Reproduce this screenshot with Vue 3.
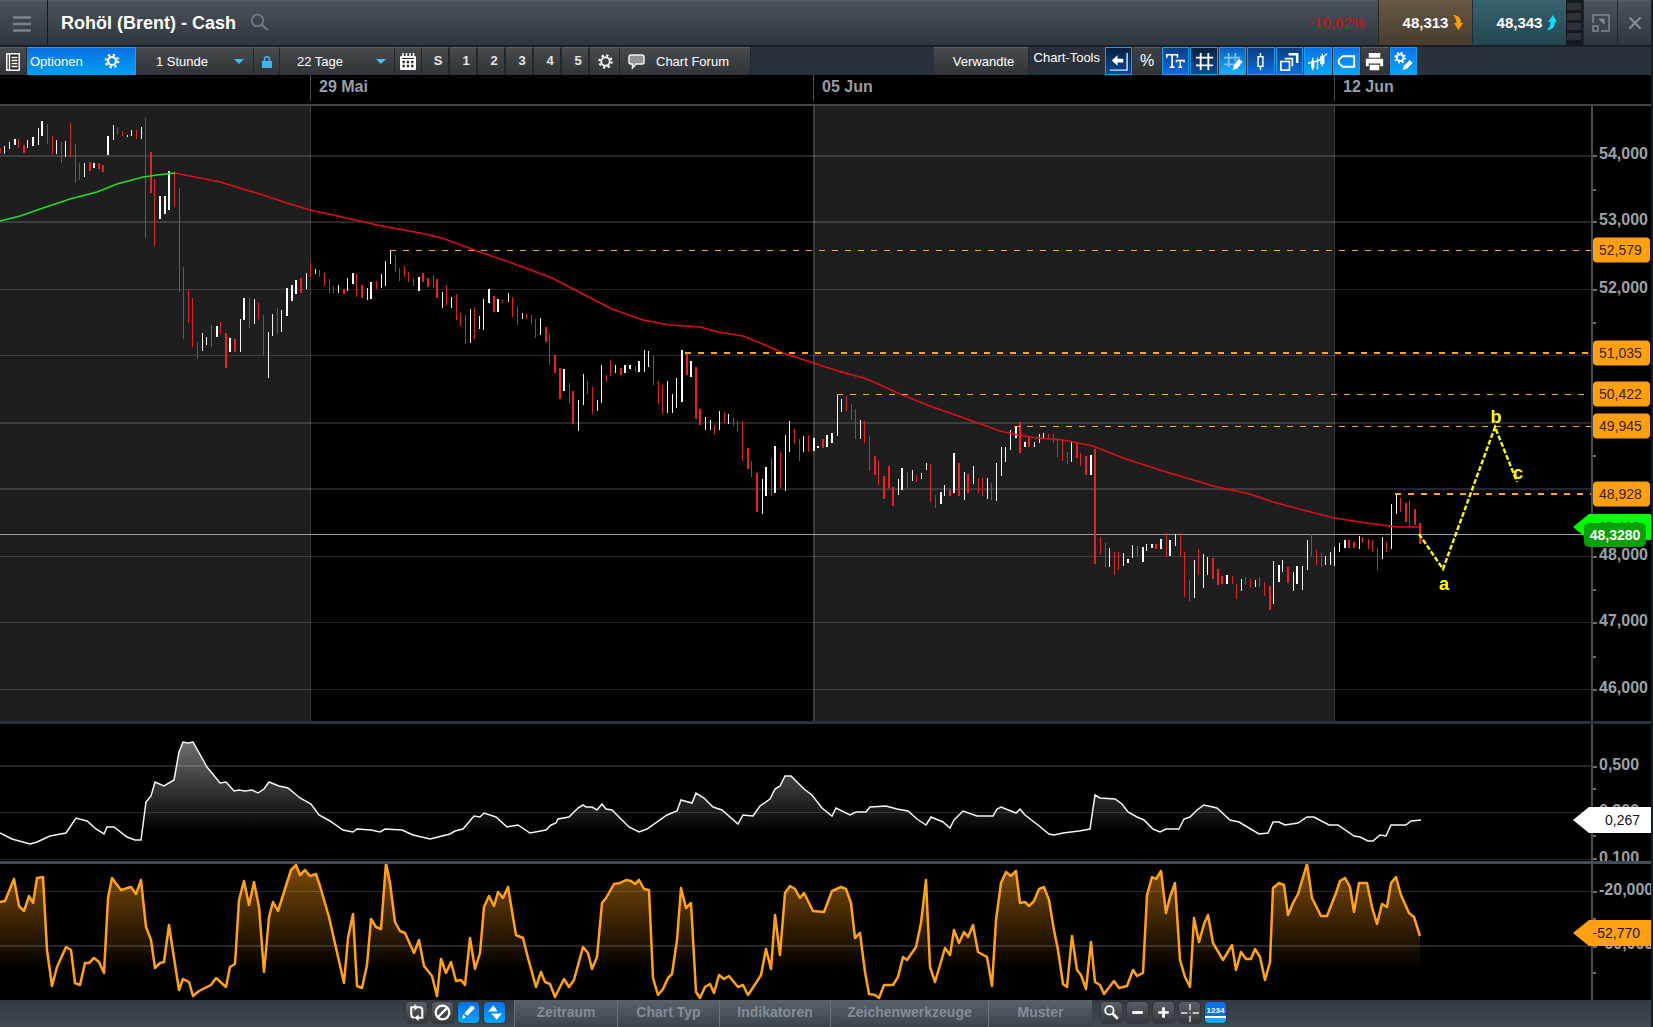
<script setup>
import { ref } from 'vue'

const interval = ref('1 Stunde')
const range = ref('22 Tage')
const presets = ['S', '1', '2', '3', '4', '5']
const tabs = [
  { label: 'Zeitraum', width: 103 },
  { label: 'Chart Typ', width: 102 },
  { label: 'Indikatoren', width: 111 },
  { label: 'Zeichenwerkzeuge', width: 158 },
  { label: 'Muster', width: 104 },
]

/* Plot space: one coordinate system shared by all three panels. */
const W = 1591
const price = { top: 106, height: 615 }
const atr = { top: 724, height: 137 }
const osc = { top: 864, height: 136 }

const pctX = (x) => `${(x / W) * 100}%`
const pctY = (panel, y) => `${((y - panel.top) / panel.height) * 100}%`

const days = [
  { x: 310, label: '29 Mai', w: 1 },
  { x: 813, label: '05 Jun', w: 2 },
  { x: 1334, label: '12 Jun', w: 1 },
]

const grid = [
  { y: 155, h: 2, label: '54,000' },
  { y: 221, h: 2, label: '53,000' },
  { y: 289, h: 1, label: '52,000' },
  { y: 355, h: 1, label: '' },
  { y: 422, h: 2, label: '' },
  { y: 488, h: 2, label: '' },
  { y: 556, h: 1, label: '48,000' },
  { y: 622, h: 1, label: '47,000' },
  { y: 689, h: 1, label: '46,000' },
]
const priceMinor = [189, 256, 322, 389, 455, 589, 656]

const levels = [
  { y: 250, x: 390, w: 1, label: '52,579' },
  { y: 353, x: 685, w: 2, label: '51,035' },
  { y: 394, x: 837, w: 1, label: '50,422' },
  { y: 426, x: 1014, w: 1, label: '49,945' },
  { y: 494, x: 1395, w: 2, label: '48,928' },
]
const waves = [
  { x: 1444, y: 584, label: 'a' },
  { x: 1496, y: 417, label: 'b' },
  { x: 1518, y: 473, label: 'c' },
]

/* Bars per block: kind x high low, in thirds of a unit from the block origin.
   w/W rising, r/R falling; capitals have a visible body. */
const blocks = [
  { x: 0, y: 100, bars: 'r 1 145 160;w 13 138 162;w 28 127 147;W 45 117 136;r 55 117 145;R 71 136 160;w 82 120 143;W 99 110 138;w 115 85 136;W 126 62 108;r 142 71 132;r 157 108 163;w 169 120 162;r 184 125 190;w 196 123 170;r 211 68 170;r 226 132 250;r 238 190 240;w 253 190 231;R 270 185 214;W 282 190 205;R 297 190 207;R 309 195 217;W 324 108 164;w 340 75 120;r 352 80 106;r 367 92 108;w 381 104 109;w 394 90 108;r 409 90 116;w 424 80 117;r 436 53 414;R 453 156 279;r 463 236 438;W 480 288 356;W 495 287 343;W 507 212 329;r 523 214 320;r 538 263 577;r 550 501 717;r 565 569 670;r 577 594 740;r 592 725 776;w 607 699 752;w 619 711 734;r 634 676 740;W 651 677 712;r 661 667 703;R 678 700 804;W 690 714 756;R 705 716 756;w 721 658 756;W 732 595 659;r 748 594 684;w 763 598 671;r 775 609 660;r 790 646 766;w 805 697 835;w 817 641 708;r 832 625 702;w 844 630 696;W 861 564 648;W 876 554 602;W 888 541 583;R 903 533 579;w 919 520 567;r 931 488 530;w 946 508 523;r 958 509 530;r 973 520 557;r 988 536 578;r 1000 557 578;w 1015 555 579;R 1032 567 581;w 1042 534 574;W 1059 520 552;r 1069 521 592;R 1086 555 594;w 1102 564 600;W 1113 546 597;r 1129 542 567;w 1144 521 563;w 1156 484 558' },
  { x: 370, y: 230, bars: 'w 61 60 101;r 76 74 125;r 88 113 153;r 103 108 141;r 115 127 155;r 130 144 168;W 147 140 182;R 159 129 156;R 174 144 170;r 190 134 170;R 201 147 204;w 217 185 234;r 229 166 229;w 244 201 234;r 259 193 270;r 271 249 288;r 286 254 342;w 301 237 339;r 313 230 326;w 328 257 297;w 340 207 300;W 357 177 219;R 373 199 246;W 384 208 245;r 397 210 220;w 415 190 216;r 427 201 260;r 442 227 284;w 457 248 267;r 469 253 267;r 484 254 283;r 496 268 323;w 511 265 315;R 528 290 335;r 538 311 404;R 555 376 428;R 570 414 506;W 582 416 483;r 598 459 523;R 609 484 581;w 625 510 602;w 640 431 526;r 652 452 491;r 667 470 551;w 682 510 543;w 694 405 519;r 709 434 456;r 721 389 437;w 736 405 428;R 753 413 435;W 765 405 430;W 780 406 418;r 796 409 427;W 807 394 426;w 823 361 426;w 835 364 412;r 850 376 466;r 865 453 522;r 877 466 551;w 892 453 549;w 907 492 549;w 919 444 534;W 936 360 516;R 951 371 434;W 963 393 442;R 978 411 567;R 990 537 586;w 1006 562 601;w 1021 570 600;r 1033 584 611;w 1048 543 601;r 1063 545 579;w 1075 552 582;r 1090 565 588;r 1102 574 602;r 1117 574 692;R 1134 653 716;r 1144 692 741;R 1161 729 845;w 1177 747 852;W 1188 710 797;r 1204 683 797;W 1215 648 789;r 1231 665 775;w 1246 615 782' },
  { x: 780, y: 370, bars: 'w 28 153 246;r 43 177 221;r 58 207 272;w 70 198 246;r 85 195 246;W 102 203 243;W 114 228 234;R 129 206 233;W 141 195 232;W 156 189 219;w 172 73 197;w 184 86 125;r 199 79 122;r 214 101 150;r 226 117 207;w 241 149 207;r 253 152 218;r 268 198 302;R 285 257 314;r 295 270 344;R 312 317 386;R 327 289 354;R 339 352 408;w 355 326 374;W 366 294 359;r 382 306 354;w 397 301 332;r 409 314 335;w 424 308 327;w 439 278 300;r 451 281 396;r 466 375 414;W 483 365 402;w 493 344 377;R 510 360 378;W 522 250 369;R 537 279 378;w 553 306 390;R 564 313 368;w 580 289 341;r 595 324 369;r 607 325 378;w 622 325 388;r 634 339 390;w 649 279 392;w 664 230 318;w 676 231 275;w 691 180 241;W 708 170 204;R 720 155 250;W 735 216 230;R 747 200 231;w 763 216 231;w 778 192 219;w 790 188 208;r 805 192 208;r 820 192 219;r 832 207 261;r 847 210 272;r 862 246 282;w 874 216 275;R 891 218 265;r 901 249 288;R 918 257 315;W 933 256 314;R 945 236 582;r 961 501 552;r 976 520 591;w 988 533 591;r 1003 546 615;r 1015 546 600;w 1030 550 588;W 1044 568 580;w 1057 525 564;r 1072 527 560;W 1089 531 577;w 1099 521 543;W 1116 523 534;R 1129 521 536;W 1143 507 536;r 1159 490 561;W 1170 509 557;w 1186 493 528;r 1201 490 558' },
  { x: 1180, y: 380, bars: 'r 13 517 651;r 28 599 664;w 43 540 654;r 55 506 586;w 70 521 624;w 82 532 584;R 99 534 596;R 114 566 614;R 126 588 612;W 141 586 611;r 157 588 611;r 169 611 656;w 184 597 633;r 196 591 614;r 211 597 624;w 226 599 621;r 238 592 621;r 253 605 648;R 270 618 689;w 280 543 671;W 297 555 605;w 307 541 575;R 324 561 609;w 340 575 634;W 351 558 611;w 367 558 629;w 382 479 569;r 394 463 528;r 409 509 555;r 424 519 561;w 436 529 555;w 451 517 555;w 463 500 558;w 478 489 516;W 495 480 503;R 507 480 503;R 522 487 504;w 538 468 507;r 548 471 489;r 565 478 506;r 577 480 516;r 592 503 570;w 607 472 537;r 619 486 516;w 634 372 507;w 649 343 402;r 661 355 396;R 678 370 425;r 688 360 444;R 705 387 435;R 720 428 492' },
]
const fills = { w: '#f4f4f4', W: '#ffffff', r: '#d42a2c', R: '#ee2024' }
const candles = blocks.flatMap((b) =>
  b.bars.split(';').map((entry) => {
    const [kind, ...n] = entry.split(' ')
    const [x, hi, lo] = n.map(Number)
    const wide = kind === 'W' || kind === 'R'
    const y = b.y + Math.round(hi / 3)
    return {
      x: b.x + (wide ? Math.round(x / 3) - 1 : Math.floor(x / 3)),
      y,
      w: wide ? 2 : 1,
      h: Math.max(2, b.y + Math.round(lo / 3) - y),
      fill: fills[kind],
    }
  })
)

const maUp = '0,221 20,216 43,208 70,199 97,192 117,184 143,177 157,175 175,173'
const maDown = '175,173 200,178 220,182 243,189 263,195 287,203 310,210 333,215 377,225 420,233 425,234 442,238 480,252 520,266 552,278 577,291 612,309 643,320 670,325 700,327 718,332 743,336 765,345 783,353 838,371 867,379 900,394 930,406 967,419 1000,431 1013,434 1037,438 1063,440 1093,446 1123,458 1163,471 1200,482 1213,486 1250,494 1273,502 1307,511 1334,518 1367,523 1397,527 1420,527'

const atrLine = '0,833 12,839 30,844 37,842 50,836 66,833 76,818 87,821 96,829 104,834 107,827 114,827 127,837 135,840 141,840 146,802 151,796 155,782 164,786 174,780 179,752 183,742 188,743 193,742 207,767 220,783 226,782 234,791 239,790 245,791 252,790 258,793 264,789 269,782 279,786 288,788 300,798 311,804 319,815 330,821 343,830 353,832 357,829 371,830 380,832 385,829 402,830 413,835 430,839 450,834 455,831 463,829 474,816 480,817 484,813 496,817 507,827 518,825 530,833 546,830 551,825 556,823 558,819 569,817 578,808 583,805 586,807 592,807 597,810 602,804 606,809 612,810 620,818 629,827 639,832 647,829 667,815 677,811 681,800 692,803 696,793 704,798 713,807 722,810 738,824 743,815 753,816 760,806 770,799 775,789 780,786 785,776 791,776 804,789 812,795 822,808 832,816 836,808 850,815 856,812 866,812 870,807 886,806 897,809 908,811 917,819 926,825 931,817 943,822 950,828 954,820 963,811 977,816 993,816 997,809 1001,807 1016,813 1020,809 1025,815 1038,825 1049,834 1054,835 1063,833 1079,831 1090,829 1095,795 1100,798 1115,799 1122,804 1128,812 1137,817 1144,820 1153,829 1160,832 1166,829 1179,829 1184,819 1190,817 1197,810 1204,805 1217,808 1230,820 1239,822 1259,834 1268,833 1273,822 1279,822 1285,825 1298,823 1307,817 1314,817 1329,825 1338,825 1354,836 1360,837 1368,841 1373,841 1380,835 1386,836 1391,825 1406,825 1411,821 1421,820'

const oscLine = '0,902 5,901 14,879 19,906 24,911 29,896 33,903 37,878 43,877 47,950 52,986 57,967 66,947 71,950 75,983 80,985 85,963 89,963 94,958 99,962 104,973 108,898 112,878 121,890 131,887 136,894 141,880 146,927 151,940 155,968 160,963 164,962 169,925 174,958 179,990 183,979 189,982 193,996 199,991 211,985 216,978 226,987 230,967 235,964 239,900 244,881 249,905 254,882 259,907 264,972 269,917 273,902 278,911 291,870 296,865 300,875 305,870 310,876 316,874 320,886 329,917 344,983 348,938 353,914 357,986 362,988 367,965 371,919 376,927 381,929 386,863 390,883 395,922 400,931 405,933 414,953 419,940 424,966 432,976 437,996 441,959 446,973 451,962 456,981 461,980 465,985 470,938 475,969 480,953 484,907 489,896 494,906 498,892 503,898 508,887 516,935 523,938 528,958 536,987 541,972 545,982 550,984 555,997 564,979 569,987 574,980 583,947 588,953 592,969 597,957 602,903 606,898 614,884 620,883 626,880 631,881 635,884 639,880 644,889 649,890 653,978 658,995 663,989 668,978 672,974 677,940 681,888 686,908 691,903 696,992 700,998 705,987 710,984 714,993 719,975 724,979 729,976 738,987 743,985 748,995 756,983 761,975 766,949 771,969 775,915 780,955 785,893 790,886 795,889 800,898 804,893 813,911 824,912 832,891 841,887 846,889 851,903 855,938 860,933 865,972 869,994 875,995 879,998 884,985 893,985 898,977 903,957 907,960 916,947 921,923 926,880 930,967 935,982 945,948 950,955 954,930 959,943 964,932 968,937 973,925 978,952 987,957 992,986 996,920 1001,883 1006,872 1011,876 1016,871 1020,903 1025,902 1029,906 1034,901 1039,889 1044,887 1049,900 1054,930 1058,950 1063,984 1067,987 1072,936 1077,970 1081,975 1086,989 1091,942 1095,982 1100,985 1104,994 1114,981 1119,988 1127,986 1133,970 1137,976 1143,973 1147,895 1152,877 1156,879 1161,871 1166,913 1170,897 1175,883 1180,960 1185,977 1190,987 1194,918 1199,942 1204,924 1208,915 1213,943 1223,960 1232,945 1236,970 1241,952 1246,959 1251,959 1255,949 1260,957 1265,980 1270,962 1273,888 1279,883 1284,885 1288,915 1293,903 1298,894 1307,864 1312,898 1321,916 1327,916 1336,893 1340,881 1345,878 1350,887 1354,912 1359,883 1367,883 1372,907 1377,924 1382,904 1387,907 1391,883 1396,877 1401,895 1409,913 1414,917 1420,936'
</script>

<template>
  <div class="app">
    <header class="titlebar">
      <button class="menu" aria-label="Menü">
        <svg width="18" height="16" viewBox="0 0 18 16"><path d="M0 1.500h18M0 8h18M0 14.500h18" stroke="#7c838a" stroke-width="2.500" /></svg>
      </button>
      <h1>Rohöl (Brent) - Cash</h1>
      <button class="search" aria-label="Suchen">
        <svg width="19" height="19" viewBox="0 0 19 19" fill="none" stroke="#747b82" stroke-width="1.800"><circle cx="7.500" cy="7.500" r="5.800" /><path d="M11.800 11.800l5.700 5.200" stroke-width="2.200" /></svg>
      </button>
      <span class="change">-10,62%</span>
      <button class="quote sell">
        48,313
        <svg width="12" height="19" viewBox="0 0 12 17"><path d="M1 1c4 0 8 2 8 8h2l-4.500 7L2 9h2.500C4.500 6 3.500 3.500 1 1z" fill="#ff9d12" /></svg>
      </button>
      <button class="quote buy">
        48,343
        <svg width="12" height="19" viewBox="0 0 12 17"><path d="M1 16c4 0 8-2 8-8h2L7 1 2 8h2.500C4.500 11 3.500 13.500 1 16z" fill="#12dcf5" /></svg>
      </button>
      <div class="strip"><i></i><i></i><i></i><i></i></div>
      <button class="win" aria-label="Maximieren">
        <svg width="18" height="18" viewBox="0 0 18 18" fill="none" stroke="#7f868c"><path d="M1 9V1h16v16H9" stroke-width="1.500" /><rect x="1" y="12" width="5" height="5" stroke-width="1.500" /><path d="M7 5h5v5z" fill="#7f868c" /></svg>
      </button>
      <button class="win" aria-label="Schließen">
        <svg width="14" height="14" viewBox="0 0 14 14"><path d="M1.500 1.500l11 11M12.500 1.500l-11 11" stroke="#8a9096" stroke-width="2" /></svg>
      </button>
    </header>

    <nav class="toolbar">
      <button class="tool list" aria-label="Liste">
        <svg width="14" height="18" viewBox="0 0 14 18"><rect x=".8" y=".8" width="12.400" height="16.400" fill="#222" stroke="#fff" stroke-width="1.500" /><path d="M3.500 1v16" stroke="#fff" stroke-width="1.500" /><path d="M5.500 4.500h6M5.500 7.500h6M5.500 10.500h6M5.500 13.500h6" stroke="#fff" stroke-width="1.400" /></svg>
      </button>
      <button class="tool options">
        Optionen
        <svg width="16" height="16" viewBox="0 0 16 16" fill="none" stroke="#fff"><circle cx="8" cy="8" r="4" stroke-width="2.200" /><circle cx="8" cy="8" r="6.300" stroke-width="2.200" stroke-dasharray="2.300 2.650" /></svg>
      </button>
      <label class="tool pick first">
        <select v-model="interval" aria-label="Intervall"><option>1 Stunde</option></select>
        <svg width="10" height="5" viewBox="0 0 10 5"><path d="M0 0h10L5 5z" fill="#4bbdf0" /></svg>
      </label>
      <button class="tool lock" aria-label="Sperren">
        <svg width="10" height="12" viewBox="0 0 10 12"><rect y="5" width="10" height="7" fill="#3fb4ec" /><path d="M2.500 5V3a2.500 2.300 0 0 1 5 0v2" fill="none" stroke="#3fb4ec" stroke-width="1.600" /></svg>
      </button>
      <label class="tool pick">
        <select v-model="range" aria-label="Zeitspanne"><option>22 Tage</option></select>
        <svg width="10" height="5" viewBox="0 0 10 5"><path d="M0 0h10L5 5z" fill="#4bbdf0" /></svg>
      </label>
      <button class="tool calendar" aria-label="Kalender">
        <svg width="16" height="17" viewBox="0 0 16 17"><rect y="3" width="16" height="14" rx="1" fill="#fff" /><path d="M3 0v5M6.500 0v5M10 0v5M13.500 0v5" stroke="#fff" stroke-width="1.500" /><path d="M2 5.500h12" stroke="#333" /><path d="M2.500 9h11M2.500 13h11" stroke="#222" stroke-width="2.500" stroke-dasharray="2.300 2" /></svg>
      </button>
      <button v-for="p in presets" :key="p" class="tool preset">{{ p }}</button>
      <button class="tool settings" aria-label="Einstellungen">
        <svg width="15" height="15" viewBox="0 0 16 16" fill="none" stroke="#f2f2f2"><circle cx="8" cy="8" r="4.500" stroke-width="2" /><circle cx="8" cy="8" r="6.500" stroke-width="2.400" stroke-dasharray="2.400 2.700" /></svg>
      </button>
      <button class="tool forum">
        <svg width="17" height="16" viewBox="0 0 17 16"><path d="M3 1h11q2 0 2 2v5q0 2-2 2H8l-3.500 4V10H3Q1 10 1 8V3q0-2 2-2z" fill="#8d9296" stroke="#f2f2f2" stroke-width="1.500" /></svg>
        Chart Forum
      </button>
      <span class="spacer"></span>
      <button class="tool related">Verwandte</button>
      <span class="tools-label">Chart-Tools</span>
      <div class="tools">
        <button class="t deep" aria-label="Zurück"><svg viewBox="0 0 24 24"><path d="M21 3v18H3" fill="none" stroke="#dce9f8" stroke-width="1.500" /><path d="M5 11l6-5.500v3.500h6v4h-6v3.500z" fill="#fff" /></svg></button>
        <button class="t plain">%</button>
        <button class="t mid" aria-label="Text"><svg viewBox="0 0 24 24" fill="none" stroke="#fff"><path d="M3 8V5h11v3M8.500 5v13M6 18h5" stroke-width="1.700" /><path d="M13 13v-2h8v2M17 11v7M15 18h4" stroke-width="1.500" /></svg></button>
        <button class="t deep" aria-label="Raster"><svg viewBox="0 0 24 24" stroke="#fff" stroke-width="1.900"><path d="M8 3v18M16 3v18M3 8h18M3 16h18" /></svg></button>
        <button class="t mid-light" aria-label="Raster bearbeiten"><svg viewBox="0 0 24 24"><path d="M8 3v15M15 3v9M3 8h17M3 15h11" stroke="#7fc4fa" stroke-width="1.900" /><path d="M12 21l1.500-5 5-7 4 3-5 7z" fill="#fff" /></svg></button>
        <button class="t mid" aria-label="Kerze"><svg viewBox="0 0 24 24" fill="none" stroke="#fff" stroke-width="1.500"><rect x="9.500" y="7" width="5" height="10" /><path d="M12 3v4M12 17v4" /></svg></button>
        <button class="t mid" aria-label="Ebenen"><svg viewBox="0 0 24 24" fill="none" stroke="#fff" stroke-width="1.700"><rect x="3" y="12" width="9" height="9" /><path d="M7 9h8v8" /><path d="M11 4.500h9v9" stroke-width="2.600" /></svg></button>
        <button class="t light" aria-label="Indikator"><svg viewBox="0 0 24 24" fill="none" stroke="#fff" stroke-width="1.400"><path d="M2 14l6-2 4 0 10-8M7 8v13M12 8v12M17 4v13" /><rect x="6" y="12" width="2" height="6" /><rect x="15.500" y="7" width="3" height="7" /></svg></button>
        <button class="t light" aria-label="Etikett"><svg viewBox="0 0 24 24" fill="none" stroke="#fff" stroke-width="2"><path d="M8 6.500h12v11H8L4 14v-4z" /></svg></button>
        <button class="t plain" aria-label="Drucken"><svg viewBox="0 0 24 24" fill="#fff"><path d="M6 3h12v5H6zM3 9h18v8h-3v-3H6v3H3zM7 15.500h10V21H7z" /></svg></button>
        <button class="t light" aria-label="Werkzeuge"><svg viewBox="0 0 24 24" fill="none" stroke="#fff"><circle cx="8.500" cy="8" r="3.500" stroke-width="2" /><circle cx="8.500" cy="8" r="5.200" stroke-width="1.800" stroke-dasharray="2 2.080" /><path d="M11 21l1.500-4.500 6-6 3 3-6 6z" fill="#fff" stroke="none" /></svg></button>
      </div>
    </nav>

    <div class="dates">
      <div class="dates-plot">
        <span v-for="d in days" :key="d.label" class="date" :style="{ left: pctX(d.x) }">{{ d.label }}</span>
      </div>
    </div>

    <main class="charts">
      <section class="panel price">
        <div class="plot">
          <svg class="canvas" viewBox="0 106 1591 615" preserveAspectRatio="none">
            <g shape-rendering="crispEdges">
              <rect x="0" y="106" width="310" height="615" fill="#1e1e1e" />
              <rect x="814" y="106" width="520" height="615" fill="#1e1e1e" />
              <rect v-for="d in days" :key="d.x" :x="d.x" y="106" :width="d.w" height="615" fill="#3c3c3c" />
              <rect v-for="g in grid" :key="g.y" x="0" :y="g.y" width="1591" :height="g.h" fill="#fff" fill-opacity=".15" />
              <rect x="0" y="534" width="1591" height="1" fill="#9a9e9c" />
              <rect v-for="(c, i) in candles" :key="i" :x="c.x" :y="c.y" :width="c.w" :height="c.h" :fill="c.fill" />
            </g>
            <g fill="none">
              <polyline :points="maUp" stroke="#21e021" stroke-width="1.500" />
              <polyline :points="maDown" stroke="#dc1018" stroke-width="1.500" />
              <line v-for="l in levels" :key="l.label" :x1="l.x" :x2="W" :y1="l.y" :y2="l.y" :stroke-width="l.w" stroke="#ffa51e" stroke-dasharray="6 7" shape-rendering="crispEdges" />
              <polyline points="1419,534 1443,569 1495,427 1517,482" stroke="#ffff00" stroke-width="2.400" stroke-dasharray="5 2" />
            </g>
          </svg>
          <span v-for="w in waves" :key="w.label" class="wave" :style="{ left: pctX(w.x), top: pctY(price, w.y) }">{{ w.label }}</span>
        </div>
        <div class="axis">
          <i v-for="g in grid" :key="g.y" class="tick" :style="{ top: pctY(price, g.y) }"></i>
          <i v-for="m in priceMinor" :key="m" class="tick minor" :style="{ top: pctY(price, m) }"></i>
          <span v-for="g in grid" :key="'l' + g.y" class="value" :style="{ top: pctY(price, g.y - 1) }">{{ g.label }}</span>
          <span v-for="l in levels" :key="l.label" class="tag" :style="{ top: pctY(price, l.y) }">{{ l.label }}</span>
          <span class="flag green" :style="{ top: pctY(price, 527) }">48,410</span>
          <span class="now" :style="{ top: pctY(price, 535) }">48,3280</span>
        </div>
      </section>

      <section class="panel atr">
        <div class="plot">
          <svg class="canvas" viewBox="0 724 1591 137" preserveAspectRatio="none">
            <defs>
              <linearGradient id="atrFill" gradientUnits="userSpaceOnUse" x1="0" y1="735" x2="0" y2="832">
                <stop offset="0" stop-color="#767676" />
                <stop offset="1" stop-color="#767676" stop-opacity="0" />
              </linearGradient>
            </defs>
            <polygon :points="`0,861 ${atrLine} 1421,861`" fill="url(#atrFill)" />
            <g fill="#fff" fill-opacity=".15" shape-rendering="crispEdges">
              <rect x="0" y="765" width="1591" height="2" />
              <rect x="0" y="812" width="1591" height="1" />
              <rect x="0" y="859" width="1591" height="1" />
            </g>
            <polyline :points="atrLine" fill="none" stroke="#f6f6f6" stroke-width="1.500" />
          </svg>
        </div>
        <div class="axis">
          <i v-for="y in [766, 812, 858]" :key="y" class="tick" :style="{ top: pctY(atr, y) }"></i>
          <i v-for="y in [788, 835]" :key="y" class="tick minor" :style="{ top: pctY(atr, y) }"></i>
          <span class="value" :style="{ top: pctY(atr, 765) }">0,500</span>
          <span class="value" :style="{ top: pctY(atr, 811) }">0,300</span>
          <span class="value" :style="{ top: pctY(atr, 858) }">0,100</span>
          <span class="flag white" :style="{ top: pctY(atr, 820) }">0,267</span>
        </div>
      </section>

      <section class="panel osc">
        <div class="plot">
          <svg class="canvas" viewBox="0 864 1591 136" preserveAspectRatio="none">
            <defs>
              <linearGradient id="oscFill" gradientUnits="userSpaceOnUse" x1="0" y1="864" x2="0" y2="970">
                <stop offset="0" stop-color="#ff9a10" stop-opacity=".5" />
                <stop offset="1" stop-color="#ff9a10" stop-opacity="0" />
              </linearGradient>
            </defs>
            <polygon :points="`0,1000 ${oscLine} 1420,1000`" fill="url(#oscFill)" />
            <g fill="#fff" fill-opacity=".15" shape-rendering="crispEdges">
              <rect x="0" y="891" width="1591" height="1" />
              <rect x="0" y="945" width="1591" height="2" />
            </g>
            <polyline :points="oscLine" fill="none" stroke="#ffa11c" stroke-width="2.500" stroke-linejoin="round" />
          </svg>
        </div>
        <div class="axis">
          <i v-for="y in [891, 946]" :key="y" class="tick" :style="{ top: pctY(osc, y) }"></i>
          <i v-for="y in [918, 972]" :key="y" class="tick minor" :style="{ top: pctY(osc, y) }"></i>
          <span class="value" :style="{ top: pctY(osc, 890) }">-20,000</span>
          <span class="value" :style="{ top: pctY(osc, 944) }">-60,000</span>
          <span class="flag orange" :style="{ top: pctY(osc, 933) }">-52,770</span>
        </div>
      </section>
    </main>

    <footer class="bottom">
      <div class="icons left">
        <button class="ic" aria-label="Aktualisieren"><svg viewBox="0 0 20 20" fill="none" stroke="#fff" stroke-width="2"><path d="M8.500 5H5v7q0 3 3 3M11.500 5H13q2.500 0 2.500 3v7h-4" /><path d="M8 2v6l4-3zM12 12v6L8 15z" fill="#fff" stroke="none" transform="translate(0 0)" /></svg></button>
        <button class="ic" aria-label="Löschen"><svg viewBox="0 0 20 20" fill="none" stroke="#fff" stroke-width="2.200"><circle cx="10" cy="10" r="6.500" /><path d="M5.500 14.500l9-9" /></svg></button>
        <button class="ic on" aria-label="Zeichnen"><svg viewBox="0 0 20 20" fill="#fff"><path d="M4 16l1-4 2.500 2.500zM6 11l6-7q3-1 4 2l-7 7z" /></svg></button>
        <button class="ic on" aria-label="Skalieren"><svg viewBox="0 0 20 20" fill="#fff"><path d="M9 3l4 6H4zM12 17l-5-6h10z" /></svg></button>
      </div>
      <div class="tabs">
        <button v-for="t in tabs" :key="t.label" class="tab" :style="{ width: t.width + 'px' }">{{ t.label }}</button>
      </div>
      <div class="icons">
        <button class="ic" aria-label="Lupe"><svg viewBox="0 0 20 20" fill="none" stroke="#fff"><circle cx="8" cy="8" r="4" stroke-width="1.700" /><path d="M11 11l5 5" stroke-width="2.500" /></svg></button>
        <button class="ic" aria-label="Verkleinern"><svg viewBox="0 0 20 20"><path d="M5 10h10" stroke="#fff" stroke-width="2.600" /></svg></button>
        <button class="ic" aria-label="Vergrößern"><svg viewBox="0 0 20 20"><path d="M5 10h10M10 5v10" stroke="#fff" stroke-width="2.600" /></svg></button>
        <button class="ic" aria-label="Fadenkreuz"><svg viewBox="0 0 20 20"><path d="M2 10.500h6M13 10.500h6M10.500 2v6M10.500 13v6M10 10.500h1" stroke="#e6e6e6" stroke-width="1.300" /></svg></button>
        <button class="ic on num">1234</button>
      </div>
    </footer>
  </div>
</template>

<style>
html,
body {
  background: #000;
}
</style>

<style scoped>
.app {
  display: flex;
  flex-direction: column;
  height: 100vh;
  box-sizing: border-box;
  border-right: 2px solid #151d28;
  background: #000;
  color: #fff;
  font-family: "Liberation Sans", Arial, sans-serif;
  overflow: hidden;
}
button,
select {
  margin: 0;
  padding: 0;
  border: 0;
  background: none;
  color: inherit;
  font: inherit;
}
svg {
  display: block;
  flex: none;
}

.titlebar {
  display: flex;
  align-items: stretch;
  flex: none;
  height: 45px;
  border-bottom: 2px solid #1a1f27;
  background: linear-gradient(#596068 0, #4a5158 2px, #30363e 100%);
}
.titlebar button {
  display: flex;
  align-items: center;
  justify-content: center;
}
.titlebar .menu {
  width: 48px;
  box-sizing: border-box;
  padding: 2px 4px 0 0;
  border-right: 1px solid #14181d;
}
h1 {
  margin: 0 0 0 13px;
  font-size: 18px;
  line-height: 47px;
  font-weight: bold;
}
.search {
  margin-left: 14px;
}
.change {
  margin-left: auto;
  margin-right: 13px;
  font-size: 15px;
  line-height: 46px;
  color: #dc0c10;
}
.titlebar .quote {
  gap: 4px;
  width: 94px;
  box-sizing: border-box;
  padding-left: 16px;
  font-size: 15px;
  font-weight: bold;
}
.titlebar .sell {
  border-left: 1px solid #2a2620;
  background: linear-gradient(#665844, #493d2e);
}
.titlebar .buy {
  border-left: 1px solid #1b2f35;
  background: linear-gradient(#37636e, #244650);
}
.strip {
  display: flex;
  flex-direction: column;
  gap: 3px;
  width: 17px;
  box-sizing: border-box;
  padding: 3px 2px 0 1px;
  background: #16191d;
}
.strip i {
  height: 7px;
  background: #2d3238;
}
.titlebar .win {
  width: 34px;
  box-sizing: border-box;
  border-left: 1px solid #23282e;
}

.toolbar {
  display: flex;
  align-items: stretch;
  flex: none;
  height: 28px;
  background: #2b313b;
  font-size: 13px;
}
.tool {
  display: flex;
  align-items: center;
  justify-content: center;
  box-sizing: border-box;
  border-top: 1px solid #5b6064;
  border-right: 1px solid #22262b;
  background: linear-gradient(#474b4f, #303337);
}
.list {
  width: 27px;
}
.options {
  justify-content: space-between;
  width: 109px;
  padding: 0 15px 1px 3px;
  border-color: #2aa0f0;
  background: linear-gradient(#0a6fe0, #00a0f5);
}
.pick {
  width: 115px;
  padding: 0 8px 0 17px;
}
.pick.first {
  width: 118px;
  padding: 0 9px 0 20px;
}
.pick select {
  flex: 1;
  min-width: 0;
  appearance: none;
}
.lock {
  width: 26px;
}
.calendar {
  width: 27px;
}
.preset {
  width: 28px;
  padding: 0 0 2px 6px;
  border-right-width: 2px;
  font-weight: bold;
  color: #e4e7e9;
}
.settings {
  width: 30px;
  padding-left: 2px;
}
.forum {
  justify-content: flex-start;
  gap: 11px;
  width: 131px;
  padding-left: 8px;
}
.spacer {
  flex: 1;
}
.related {
  width: 95px;
  padding-left: 6px;
}
.tools-label {
  margin: 0 5px;
  line-height: 22px;
}
.tools {
  display: flex;
  gap: 1px;
  width: 312px;
  margin-right: 234px;
}
.t {
  display: flex;
  flex: 1;
  align-items: center;
  justify-content: center;
  box-sizing: border-box;
  border: 1px solid #1a9cf0;
}
.t svg {
  width: 23px;
  height: 23px;
}
.deep {
  background: linear-gradient(#06203f, #0b4a9c);
}
.mid {
  background: linear-gradient(#0a3d80, #0a6ee0);
}
.mid-light {
  background: linear-gradient(#0a5fc0, #17b2ff);
}
.light {
  background: linear-gradient(#0a74e8, #08a4f8);
}
.plain {
  border-color: transparent;
  border-top-color: #5b6064;
  background: linear-gradient(#3d4145, #303337);
  font-size: 16px;
}

.dates {
  flex: none;
  height: 29px;
  padding-right: 60px;
  border-bottom: 2px solid #444;
}
.dates-plot {
  position: relative;
  height: 29px;
}
.date {
  position: absolute;
  top: 0;
  height: 26px;
  padding-left: 8px;
  border-left: 1px solid #4a4a4a;
  font-size: 16px;
  font-weight: bold;
  line-height: 23px;
  color: #989ea4;
}

.charts {
  display: flex;
  flex: 1;
  flex-direction: column;
  min-height: 0;
}
.panel {
  display: flex;
  min-height: 0;
  overflow: hidden;
}
.price {
  flex: 615 1 0;
}
.atr {
  flex: 137 1 0;
  border-top: 3px solid #2a3038;
}
.osc {
  flex: 136 1 0;
  border-top: 3px solid #434c55;
}
.plot {
  position: relative;
  flex: 1;
  min-width: 0;
}
.canvas {
  position: absolute;
  inset: 0;
  width: 100%;
  height: 100%;
}
.wave {
  position: absolute;
  transform: translate(-50%, -50%);
  font-size: 18px;
  line-height: 20px;
  font-weight: bold;
  color: #ffff00;
}
.axis {
  position: relative;
  width: 60px;
  box-sizing: border-box;
  border-left: 2px solid #4a4a4a;
}
.tick {
  position: absolute;
  left: 0;
  width: 4px;
  height: 2px;
  background: #6a6e70;
}
.minor {
  width: 3px;
}
.value {
  position: absolute;
  left: 6px;
  transform: translateY(-50%);
  font-size: 16px;
  line-height: 18px;
  font-weight: bold;
  color: #9aa2a8;
}
.tag,
.now,
.flag {
  position: absolute;
  box-sizing: border-box;
  transform: translateY(-50%);
  font-size: 14px;
  white-space: nowrap;
}
.tag {
  left: 0;
  width: 57px;
  padding-left: 6px;
  border-radius: 4px;
  background: #ffa012;
  line-height: 25px;
  color: #3a2200;
}
.flag {
  right: 0;
  width: 78px;
  padding-right: 11px;
  clip-path: polygon(0 50%, 16px 0, 100% 0, 100% 100%, 16px 100%);
  line-height: 26px;
  text-align: right;
}
.green {
  background: #00ff00;
  color: #0a3a0a;
}
.white {
  background: #fff;
  color: #111;
}
.orange {
  background: #ffa012;
  color: #221400;
}
.now {
  right: 5px;
  width: 62px;
  border-radius: 5px;
  background: #08a008;
  line-height: 24px;
  text-align: center;
  font-weight: bold;
}

.bottom {
  display: flex;
  flex: none;
  justify-content: center;
  height: 27px;
  box-sizing: border-box;
  padding-right: 19px;
  background: linear-gradient(#333a40, #404850);
}
.icons {
  display: flex;
  gap: 5px;
  padding: 2px 8px 0 9px;
}
.icons.left {
  padding: 2px 9px 0 8px;
}
.ic {
  width: 21px;
  height: 21px;
  border-radius: 4px;
  background: linear-gradient(#5a5f65, #34383d);
  box-shadow: 0 0 2px #1d2125;
}
.ic svg {
  width: 21px;
  height: 21px;
}
.on {
  background: linear-gradient(#0a6fe8, #06a6fa);
}
.num {
  background: linear-gradient(#0a6fe8 0 14px, #fff 14px 16px, #12a8f8 16px);
  padding-bottom: 3px;
  font-size: 8px;
  font-weight: bold;
  line-height: 16px;
}
.tabs {
  display: flex;
}
.tab {
  box-sizing: border-box;
  border-left: 1px solid #6a727b;
  padding-bottom: 3px;
  background: linear-gradient(#5a616a, #3c434a);
  font-size: 14px;
  font-weight: bold;
  color: #858c96;
}
</style>
